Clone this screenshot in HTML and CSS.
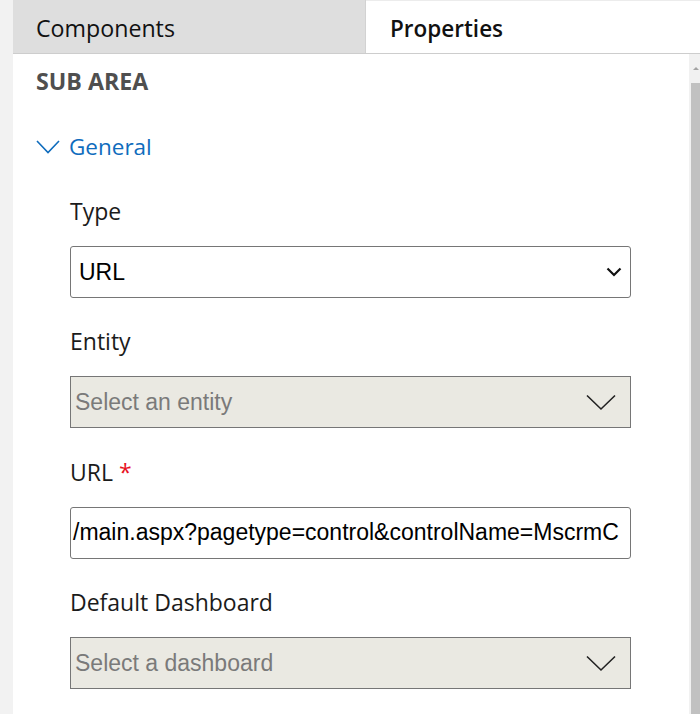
FILE: index.html
```html
<!DOCTYPE html>
<html>
<head>
<meta charset="utf-8">
<link rel="stylesheet" href="styles.css">
</head>
<body>
<div class="app">
  <div class="rail"></div>
  <div class="main">
    <div class="tabs">
      <div class="tab tab-inactive">Components</div>
      <div class="tab tab-active">Properties</div>
    </div>
    <div class="body">
      <div class="content">
        <div class="heading">SUB AREA</div>
        <div class="section-title">
          <svg class="section-chevron" width="24" height="14" viewBox="0 0 24 14"><polyline points="1,1 12,12.5 23,1" fill="none" stroke="#0f6cbd" stroke-width="1.6"/></svg>
          <span>General</span>
        </div>
        <div class="fields">
          <div class="field">
            <div class="label">Type</div>
            <div class="box box-select">
              <span class="value">URL</span>
              <svg class="small-chevron" width="16" height="10" viewBox="0 0 16 10"><polyline points="1.5,1.5 8,8 14.5,1.5" fill="none" stroke="#111" stroke-width="2.2"/></svg>
            </div>
          </div>
          <div class="field">
            <div class="label">Entity</div>
            <div class="box box-disabled">
              <span class="placeholder">Select an entity</span>
              <svg class="big-chevron" width="30" height="17" viewBox="0 0 30 17"><polyline points="1,1.5 15,15 29,1.5" fill="none" stroke="#222" stroke-width="1.6"/></svg>
            </div>
          </div>
          <div class="field">
            <div class="label">URL <span class="req">*</span></div>
            <div class="box box-text">
              <span class="value">/main.aspx?pagetype=control&amp;controlName=MscrmC</span>
            </div>
          </div>
          <div class="field">
            <div class="label">Default Dashboard</div>
            <div class="box box-disabled">
              <span class="placeholder">Select a dashboard</span>
              <svg class="big-chevron" width="30" height="17" viewBox="0 0 30 17"><polyline points="1,1.5 15,15 29,1.5" fill="none" stroke="#222" stroke-width="1.6"/></svg>
            </div>
          </div>
        </div>
      </div>
      <div class="scrollbar">
        <div class="scroll-arrow"></div>
        <div class="scroll-thumb"></div>
      </div>
    </div>
  </div>
</div>
</body>
</html>
```

FILE: styles.css
```css
html, body {
  margin: 0;
  padding: 0;
  background: #ffffff;
}
body {
  font-family: "Open Sans", "Noto Sans", sans-serif;
  color: #1b1b1b;
}
.app {
  display: flex;
  height: 714px;
  overflow: hidden;
}
.rail {
  width: 13px;
  background: #f2f2f2;
  flex: none;
}
.main {
  flex: 1;
  display: flex;
  flex-direction: column;
  min-width: 0;
}
.tabs {
  display: flex;
  height: 53px;
  border-bottom: 1px solid #cdcdcd;
  flex: none;
}
.tab {
  display: flex;
  align-items: center;
  font-size: 22.5px;
  color: #111;
  box-sizing: border-box;
  padding-top: 2px;
}
.tab-inactive {
  width: 353px;
  background: #dedede;
  border-right: 1px solid #d2d2d2;
  padding-left: 23px;
  font-size: 23.2px;
}
.tab-active {
  flex: 1;
  background: #fff;
  border-top: 1px solid #ececec;
  padding-left: 24px;
  font-weight: 600;
}
.body {
  flex: 1;
  display: flex;
  min-height: 0;
}
.content {
  flex: 1;
  padding-left: 23px;
  min-width: 0;
}
.heading {
  font-size: 23.2px;
  font-weight: 700;
  color: #4f4f4f;
  height: 30px;
  line-height: 30px;
  margin-top: 12px;
}
.section-title {
  display: flex;
  align-items: center;
  gap: 9px;
  margin-top: 35px;
  height: 30px;
  font-size: 22.5px;
  color: #0f6cbd;
}
.section-chevron {
  flex: none;
  margin-top: 1px;
}
.fields {
  padding-left: 34px;
  padding-top: 35px;
}
.field {
  width: 561px;
}
.field + .field {
  margin-top: 28.4px;
}
.label {
  font-size: 23px;
  height: 30px;
  line-height: 30px;
  color: #1b1b1b;
  margin-bottom: 20px;
}
.req {
  color: #e81123;
}
.box {
  height: 52px;
  box-sizing: border-box;
  border: 1px solid #767676;
  display: flex;
  align-items: center;
  font-family: "Liberation Sans", Arial, sans-serif;
  font-size: 23px;
  overflow: hidden;
  white-space: nowrap;
}
.box-select, .box-text {
  border-radius: 3px;
  background: #fff;
}
.box-select {
  padding: 0 8px 0 8px;
  justify-content: space-between;
}
.box-text {
  padding-left: 2px;
}
.box-disabled {
  background: #eae9e2;
  padding: 0 14px 0 4px;
  justify-content: space-between;
}
.value {
  color: #000;
}
.placeholder {
  color: #7a7a7a;
}
.small-chevron, .big-chevron {
  flex: none;
}
.scrollbar {
  width: 11px;
  flex: none;
  background: #f1f1f1;
  display: flex;
  flex-direction: column;
  align-items: flex-end;
}
.scroll-arrow {
  width: 0;
  height: 0;
  margin: 13px 1px 0 0;
  border-left: 3px solid transparent;
  border-right: 3px solid transparent;
  border-bottom: 3px solid #a3a3a3;
}
.scroll-thumb {
  width: 9px;
  flex: 1;
  margin-top: 13px;
  background: #c1c1c1;
}
```
